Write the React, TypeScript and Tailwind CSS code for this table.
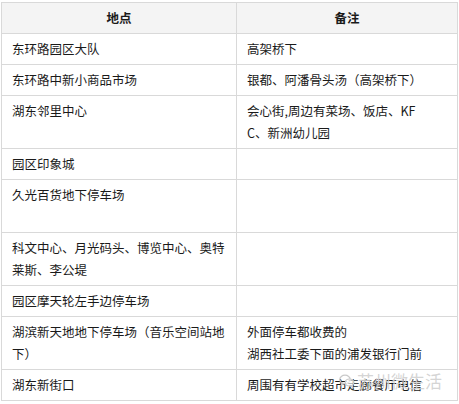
import React from "react";

const rows: { left: React.ReactNode; right: React.ReactNode; h: string }[] = [
  { left: "东环路园区大队", right: "高架桥下", h: "h-[31px]" },
  { left: "东环路中新小商品市场", right: "银都、阿潘骨头汤（高架桥下）", h: "h-[31px]" },
  {
    left: "湖东邻里中心",
    right: (
      <>
        会心街,周边有菜场、饭店、KF
        <br />
        C、新洲幼儿园
      </>
    ),
    h: "h-[53px]",
  },
  { left: "园区印象城", right: "", h: "h-[31px]" },
  { left: "久光百货地下停车场", right: "", h: "h-[53px]" },
  {
    left: (
      <>
        科文中心、月光码头、博览中心、奥特
        <br />
        莱斯、李公堤
      </>
    ),
    right: "",
    h: "h-[53px]",
  },
  { left: "园区摩天轮左手边停车场", right: "", h: "h-[31px]" },
  {
    left: (
      <>
        湖滨新天地地下停车场（音乐空间站地
        <br />
        下）
      </>
    ),
    right: (
      <>
        外面停车都收费的
        <br />
        湖西社工委下面的浦发银行门前
      </>
    ),
    h: "h-[53px]",
  },
  { left: "湖东新街口", right: "周围有有学校超市走廊餐厅电信", h: "h-[31px]" },
];

function WeChatMark() {
  return (
    <svg width="16" height="14" viewBox="0 0 16 14" fill="none" stroke="#c9c9c9" strokeWidth="1.2">
      <ellipse cx="6" cy="5.5" rx="5.2" ry="4.3" />
      <path d="M3 9 L2.2 11.2 L5 9.7" />
      <ellipse cx="10.5" cy="8.5" rx="4.3" ry="3.5" fill="white" fillOpacity="0.6" />
      <path d="M13 11.5 L13.8 13.2 L11.6 11.9" />
    </svg>
  );
}

export default function App() {
  return (
    <div className="relative w-[459px] h-[404px] bg-white pt-[2px] pl-[1px]">
      <table
        className="w-[456px] table-fixed border-collapse text-[12.5px] leading-[22px] text-[#1a1a1a]"
        style={{ fontFamily: '"Noto Sans CJK SC", "Noto Sans", sans-serif' }}
      >
        <colgroup>
          <col className="w-[235px]" />
          <col className="w-[221px]" />
        </colgroup>
        <thead>
          <tr className="h-[31px] bg-[#f4f4f4]">
            <th className="border border-[#d9d9d9] px-[10px] py-0 text-center font-bold align-middle">地点</th>
            <th className="border border-[#d9d9d9] px-[10px] py-0 text-center font-bold align-middle">备注</th>
          </tr>
        </thead>
        <tbody>
          {rows.map((r, i) => (
            <tr key={i} className={r.h}>
              <td className="border border-[#d9d9d9] pl-[10px] pr-0 pt-[4px] align-top whitespace-nowrap">{r.left}</td>
              <td className="border border-[#d9d9d9] pl-[10px] pr-0 pt-[4px] align-top whitespace-nowrap">{r.right}</td>
            </tr>
          ))}
        </tbody>
      </table>
      <div
        className="absolute left-[339px] top-[372px] flex items-center gap-[2px] text-[17px] leading-[18px] text-[#cfcfcf]/90"
        style={{ fontFamily: '"Noto Sans CJK SC", sans-serif' }}
      >
        <WeChatMark />
        <span>苏州微生活</span>
      </div>
    </div>
  );
}
